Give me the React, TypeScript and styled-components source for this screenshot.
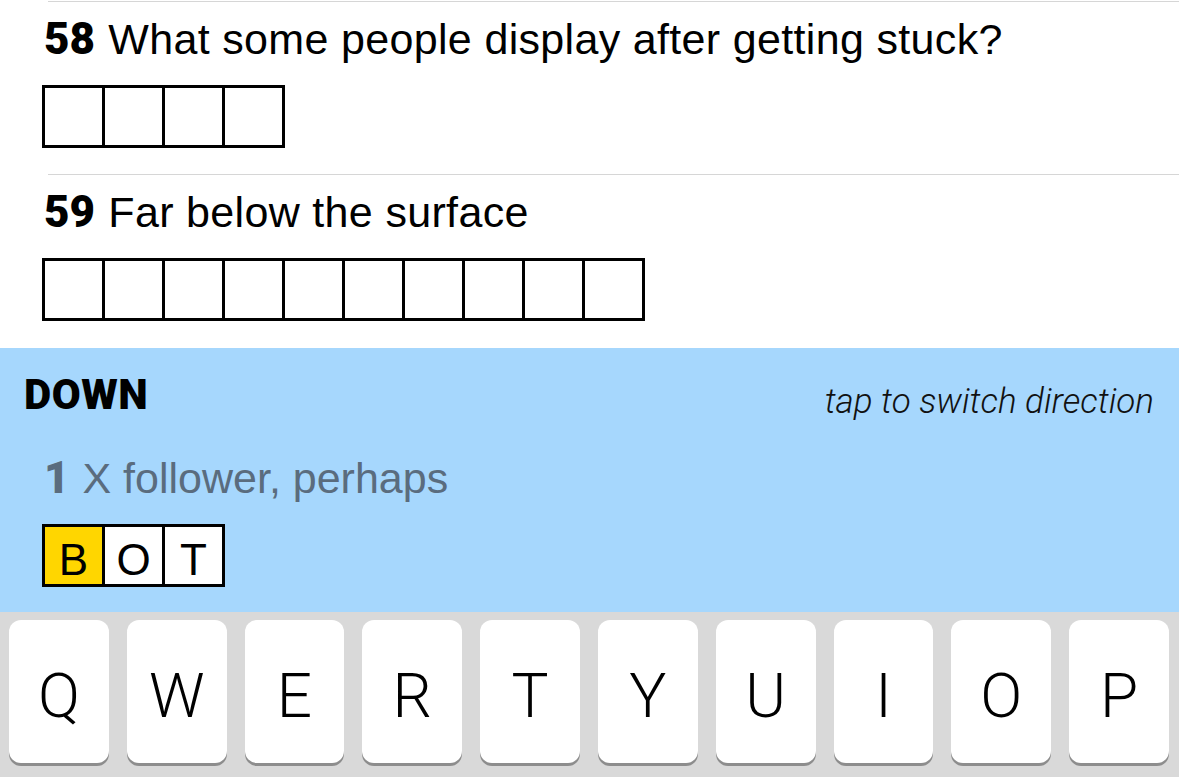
import styled, { createGlobalStyle } from 'styled-components';

const GlobalStyle = createGlobalStyle`
  html, body {
    margin: 0;
    padding: 0;
    background: #ffffff;
  }

  body {
    font-family: 'Liberation Sans', Arial, sans-serif;
    color: #000;
  }
`;

const clues = [
  { num: 58, text: 'What some people display after getting stuck?', length: 4 },
  { num: 59, text: 'Far below the surface', length: 10 },
];

const keys = ['Q', 'W', 'E', 'R', 'T', 'Y', 'U', 'I', 'O', 'P'];

const Screen = styled.div`
  width: 1179px;
  height: 777px;
  overflow: hidden;
  display: flex;
  flex-direction: column;
`;

const ClueList = styled.div`
  padding: 1px 0 1px;
  background: #fff;
`;

// each clue sits under a thin rule that starts a little in from the left
const ClueItem = styled.div`
  position: relative;
  padding: 13px 0 26px 42px;

  &::before {
    content: '';
    position: absolute;
    top: 0;
    left: 48px;
    right: 0;
    height: 1px;
    background: #d6d6d6;
  }
`;

const ClueText = styled.div<{ $muted?: boolean }>`
  font-size: 43px;
  line-height: 50px;
  letter-spacing: ${(p) => (p.$muted ? '0' : '0.33px')};
  padding-left: 2px;
  color: ${(p) => (p.$muted ? '#5a6c7e' : '#000')};
  white-space: nowrap;
`;

const ClueNum = styled.span`
  font-family: Roboto, 'Liberation Sans', sans-serif;
  font-weight: 900;
  font-size: 44px;
  letter-spacing: 0;
  margin-right: 1px;
`;

const Grid = styled.div`
  display: flex;
  margin-top: 21px;
`;

const Cell = styled.div<{ $active?: boolean }>`
  width: 63px;
  height: 63px;
  box-sizing: border-box;
  border: 3px solid #000;
  margin-left: -3px;
  background: ${(p) => (p.$active ? '#ffd600' : '#fff')};
  display: flex;
  justify-content: center;
  align-items: center;
  padding-top: 8px;
  font-size: 44px;
  line-height: 1;

  &:first-child {
    margin-left: 0;
  }
`;

const Panel = styled.div`
  background: #a6d7fd;
  padding: 23px 25px 25px 24px;
`;

const PanelHeader = styled.div`
  display: flex;
  justify-content: space-between;
  align-items: flex-start;
`;

const Direction = styled.div`
  font-family: Roboto, 'Liberation Sans', sans-serif;
  font-weight: 900;
  font-size: 42px;
  line-height: 48px;
  letter-spacing: 0.5px;
`;

const SwitchHint = styled.div`
  margin-top: 11px;
  font-family: Roboto, 'Liberation Sans', sans-serif;
  font-weight: 300;
  font-style: italic;
  font-size: 35px;
  line-height: 40px;
  color: #111;
`;

const ActiveClue = styled.div`
  margin: 31px 0 0 18px;
`;

const Keyboard = styled.div`
  flex: 1;
  background: #d9d9d9;
  display: flex;
  gap: 18px;
  padding: 8px 10px 0 9px;
`;

const Key = styled.div`
  flex: 1;
  height: 143px;
  background: #fff;
  border-radius: 12px;
  box-shadow: 0 3px 0 #8d8d8d;
  display: flex;
  justify-content: center;
  align-items: flex-start;
  padding-top: 46px;
  box-sizing: border-box;
  font-family: Roboto, 'Liberation Sans', sans-serif;
  font-weight: 300;
  font-size: 62px;
  line-height: 60px;
`;

const App: React.FC = () => {
  return (
    <>
      <GlobalStyle />
      <Screen>
        <ClueList>
          {clues.map((c) => (
            <ClueItem key={c.num}>
              <ClueText>
                <ClueNum>{c.num}</ClueNum> {c.text}
              </ClueText>
              <Grid>
                {Array.from({ length: c.length }).map((_, i) => (
                  <Cell key={i} />
                ))}
              </Grid>
            </ClueItem>
          ))}
        </ClueList>
        <Panel>
          <PanelHeader>
            <Direction>DOWN</Direction>
            <SwitchHint>tap to switch direction</SwitchHint>
          </PanelHeader>
          <ActiveClue>
            <ClueText $muted>
              <ClueNum>1</ClueNum> X follower, perhaps
            </ClueText>
            <Grid>
              {['B', 'O', 'T'].map((l, i) => (
                <Cell key={i} $active={i === 0}>
                  {l}
                </Cell>
              ))}
            </Grid>
          </ActiveClue>
        </Panel>
        <Keyboard>
          {keys.map((k) => (
            <Key key={k}>{k}</Key>
          ))}
        </Keyboard>
      </Screen>
    </>
  );
};

export default App;
